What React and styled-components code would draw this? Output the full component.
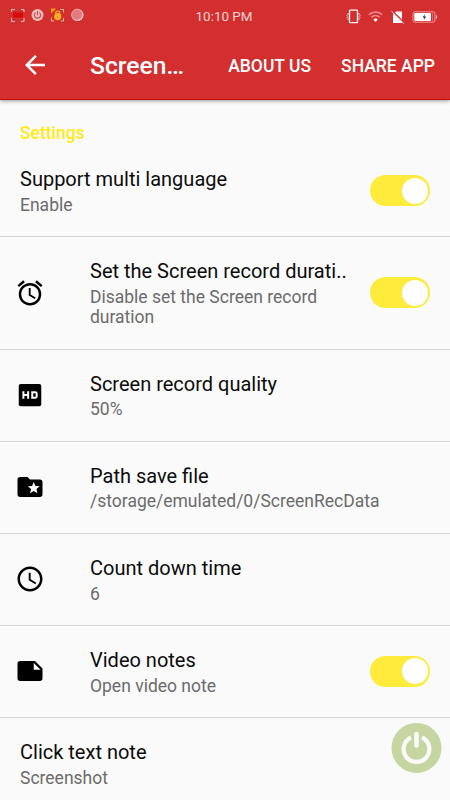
import React, { useState } from 'react'
import styled, { createGlobalStyle } from 'styled-components'
import {
  MdAccessAlarm,
  MdAccessTime,
  MdArrowBack,
  MdFolderSpecial,
  MdNote
} from 'react-icons/md'

const GlobalStyle = createGlobalStyle`
  * {
    box-sizing: border-box;
  }
  body {
    margin: 0;
    background: #fafafa;
    font-family: Roboto, 'Liberation Sans', sans-serif;
  }
`
const Screen = styled.div`
  position: relative;
  width: 450px;
  height: 800px;
  overflow: hidden;
  background: #fafafa;
`
const Header = styled.header`
  height: 100px;
  background: #d32f2f;
  border-bottom: 1px solid #c60d0d;
  box-shadow: 0 1px 4px rgba(0, 0, 0, 0.4);
  color: white;
`
const StatusBar = styled.div`
  display: grid;
  grid-template-columns: 1fr auto 1fr;
  align-items: center;
  height: 30px;
  padding: 0 12px 0 10px;
`
const StatusIcons = styled.div`
  display: flex;
  align-items: center;
  justify-content: ${props => (props.$end ? 'flex-end' : 'flex-start')};
  gap: ${props => (props.$end ? '7px' : '5px')};
  padding-top: ${props => (props.$end ? '3px' : '0')};

  svg {
    display: block;
  }
`
const Clock = styled.span`
  padding-top: 3px;
  font-size: 13.4px;
  line-height: 16px;
  color: #f6d3d3;
`
const Toolbar = styled.div`
  display: flex;
  align-items: center;
  height: 70px;
  padding: 0 15px 0 20px;
`
const BackButton = styled.button`
  display: flex;
  width: 30px;
  margin-right: 40px;
  padding: 0;
  border: none;
  background: none;
  color: white;
  font-size: 30px;
`
const Title = styled.h1`
  flex: 1;
  margin: 0;
  padding-top: 2px;
  font-size: 24.7px;
  line-height: 30px;
  font-weight: 500;
  white-space: nowrap;
`
const Action = styled.button`
  margin-left: 30px;
  padding: 2px 0 0;
  border: none;
  background: none;
  color: white;
  font-family: inherit;
  font-size: 17.5px;
  line-height: 21px;
  font-weight: 500;
  white-space: nowrap;
`
const SectionTitle = styled.h2`
  height: 45px;
  margin: 0;
  padding: 23px 20px 0;
  color: #ffeb16;
  font-size: 17.5px;
  line-height: 21px;
  font-weight: 500;
`
const Row = styled.div`
  display: flex;
  align-items: center;
  height: ${props => props.$height || '92.1px'};
  padding: 0 20px 0 ${props => (props.$icon ? '15px' : '20px')};
  border-bottom: 1px solid #d6d6d6;
`
const RowIcon = styled.div`
  display: flex;
  width: 75px;
  font-size: 30px;
  color: black;
`
const RowText = styled.div`
  flex: 1;
  min-width: 0;
  padding-top: 1.4px;
`
const RowTitle = styled.div`
  color: #0c0c0c;
  font-size: 20px;
  line-height: 24px;
  white-space: nowrap;
`
const RowSummary = styled.div`
  max-width: ${props => (props.$narrow ? '250px' : 'none')};
  padding-top: 3.5px;
  color: #6b6b6b;
  font-size: 17.5px;
  line-height: 20.5px;
`
const Track = styled.button`
  display: flex;
  justify-content: ${props => (props.$on ? 'flex-end' : 'flex-start')};
  align-items: center;
  width: 60px;
  height: 31px;
  padding: 0 2px;
  border: none;
  border-radius: 16px;
  background: ${props => (props.$on ? '#ffeb3b' : '#cccccc')};
`
const Thumb = styled.span`
  width: 26px;
  height: 26px;
  border-radius: 50%;
  background: white;
`
const PowerButton = styled.button`
  position: absolute;
  left: 391px;
  top: 722px;
  width: 51px;
  height: 51px;
  padding: 0;
  border: none;
  background: none;

  svg {
    display: block;
  }
`

const RecordIcon = () => (
  <svg width='15' height='14' viewBox='0 0 15 14'>
    <rect x='3' y='4.500' width='10' height='5' fill='#dc0808' />
    <path
      d='M1.500 4V1.500H5M11 1.500h3V4M14 10v3.500H11M5 13.500H1.500V10'
      fill='none'
      stroke='#f6caca'
      strokeWidth='1'
    />
  </svg>
)

const PowerStatusIcon = () => (
  <svg width='15' height='14' viewBox='0 0 15 14'>
    <circle cx='7.500' cy='7' r='6' fill='#f0b9bb' />
    <path
      d='M5.600 4.600a3.100 3.100 0 1 0 3.800 0M7.500 3v4.300'
      fill='none'
      stroke='#c94950'
      strokeWidth='1.100'
    />
  </svg>
)

const LockStatusIcon = () => (
  <svg width='15' height='14' viewBox='0 0 15 14'>
    <path d='M1 .5h5L4.500 2.500 3 3.500 1 5.500z' fill='#fb9d10' />
    <path
      d='M10 1.500H13.500V4.500M1.500 9.500v3.500H4M11 13h2.500v-3'
      fill='none'
      stroke='#f3b9a0'
      strokeWidth='1'
    />
    <path d='M5.700 6.500V5.200a2 2 0 0 1 4 0v1.300' fill='none' stroke='#ffb020' strokeWidth='1.200' />
    <circle cx='7.700' cy='8.600' r='3.600' fill='#ffb020' />
    <path d='M7.200 8h1v2h-1z' fill='#e58a10' />
  </svg>
)

const RoundStatusIcon = () => (
  <svg width='15' height='14' viewBox='0 0 15 14'>
    <circle cx='7.500' cy='7' r='6' fill='#f5d5d5' />
    <circle cx='7' cy='6.600' r='5.300' fill='#e27c80' />
    <circle cx='7.200' cy='6.800' r='5.700' fill='none' stroke='#efa9ab' strokeWidth='.6' />
  </svg>
)

const VibrateIcon = () => (
  <svg width='15' height='15' viewBox='0 0 15 15'>
    <rect x='3.500' y='1.200' width='8' height='12.500' rx='.8' fill='none' stroke='#fff' strokeWidth='1.300' />
    <path
      d='M2 4v1.500l-1 1 1 1-1 1 1 1V11M13 4v1.500l1 1-1 1 1 1-1 1V11'
      fill='none'
      stroke='#f3cccc'
      strokeWidth='1'
    />
  </svg>
)

const WifiIcon = () => (
  <svg width='15' height='13' viewBox='0 0 15 13'>
    <path
      d='M.8 4.700a9.600 9.600 0 0 1 13.400 0M3.300 7.200a6 6 0 0 1 8.400 0'
      fill='none'
      stroke='#e98f8f'
      strokeWidth='1.400'
    />
    <path d='M7.500 12L5.300 9.500a3.200 3.200 0 0 1 4.400 0z' fill='#fff' />
  </svg>
)

const NoSimIcon = () => (
  <svg width='15' height='14' viewBox='0 0 15 14'>
    <path d='M6 1.500H12v11.500H3V4.500z' fill='#fff' />
    <path d='M2.300.9L14.900 13.400' stroke='#d32f2f' strokeWidth='1.500' />
    <path d='M1.500 1.300L14.100 13.800' stroke='#f8dada' strokeWidth='1' />
  </svg>
)

const BatteryIcon = () => (
  <svg width='26' height='12' viewBox='0 0 26 12'>
    <rect x='1' y='.8' width='22' height='10.400' rx='2' fill='none' stroke='#ed9b9b' strokeWidth='1' />
    <rect x='2.300' y='2.100' width='16.700' height='7.800' rx='.8' fill='#fff' />
    <path d='M20.500 2v8' stroke='#ed9b9b' strokeWidth='.6' />
    <path d='M24.500 4.500v3' stroke='#f3bcbc' strokeWidth='1.200' />
    <path d='M13 3L10.500 6.400h1.800l-.5 2.600L14.300 5.500h-1.900z' fill='#333' />
  </svg>
)

// heavier lettering than the stock HD glyph
const HdIcon = () => (
  <svg width='30' height='30' viewBox='0 0 24 24' fill='currentColor'>
    <rect x='3' y='3.200' width='18' height='17.800' rx='1.600' />
    <path
      d='M6.700 9v6M10.500 9v6M6.700 12h3.800M13.800 9.800h2.700l.8.800v2.800l-.8.800h-2.700z'
      fill='none'
      stroke='#fafafa'
      strokeWidth='1.600'
    />
  </svg>
)

const Switch = ({ label }) => {
  const [on, setOn] = useState(true)

  return (
    <Track $on={on} role='switch' aria-checked={on} aria-label={label} onClick={() => setOn(!on)}>
      <Thumb />
    </Track>
  )
}

const settings = [
  { title: 'Support multi language', summary: 'Enable', toggle: true },
  {
    title: 'Set the Screen record durati..',
    summary: 'Disable set the Screen record duration',
    icon: <MdAccessAlarm />,
    toggle: true,
    height: '112.5px'
  },
  { title: 'Screen record quality', summary: '50%', icon: <HdIcon /> },
  {
    title: 'Path save file',
    summary: '/storage/emulated/0/ScreenRecData',
    icon: <MdFolderSpecial />
  },
  { title: 'Count down time', summary: '6', icon: <MdAccessTime /> },
  { title: 'Video notes', summary: 'Open video note', icon: <MdNote />, toggle: true },
  { title: 'Click text note', summary: 'Screenshot' }
]

const App = () => {
  return (
    <Screen>
      <GlobalStyle />
      <Header>
        <StatusBar>
          <StatusIcons>
            <RecordIcon />
            <PowerStatusIcon />
            <LockStatusIcon />
            <RoundStatusIcon />
          </StatusIcons>
          <Clock>10:10 PM</Clock>
          <StatusIcons $end>
            <VibrateIcon />
            <WifiIcon />
            <NoSimIcon />
            <BatteryIcon />
          </StatusIcons>
        </StatusBar>
        <Toolbar>
          <BackButton aria-label='Back'>
            <MdArrowBack />
          </BackButton>
          <Title>Screen…</Title>
          <Action>ABOUT US</Action>
          <Action>SHARE APP</Action>
        </Toolbar>
      </Header>
      <SectionTitle>Settings</SectionTitle>
      {settings.map(item => (
        <Row key={item.title} $icon={!!item.icon} $height={item.height}>
          {item.icon && <RowIcon>{item.icon}</RowIcon>}
          <RowText>
            <RowTitle>{item.title}</RowTitle>
            <RowSummary $narrow={item.toggle}>{item.summary}</RowSummary>
          </RowText>
          {item.toggle && <Switch label={item.title} />}
        </Row>
      ))}
      <PowerButton aria-label='Power'>
        <svg width='51' height='51' viewBox='0 0 51 51'>
          <circle cx='25.500' cy='25.900' r='25' fill='#c5d6a0' />
          <path
            d='M20 15.400a12.900 12.900 0 1 0 11 0'
            fill='none'
            stroke='#fafafa'
            strokeWidth='4.300'
          />
          <path
            d='M25.500 12v11.500'
            stroke='#c5d6a0'
            strokeWidth='8'
            strokeLinecap='round'
          />
          <path d='M25.500 12v11.500' stroke='#fafafa' strokeWidth='4.600' strokeLinecap='round' />
        </svg>
      </PowerButton>
    </Screen>
  )
}

export default App
